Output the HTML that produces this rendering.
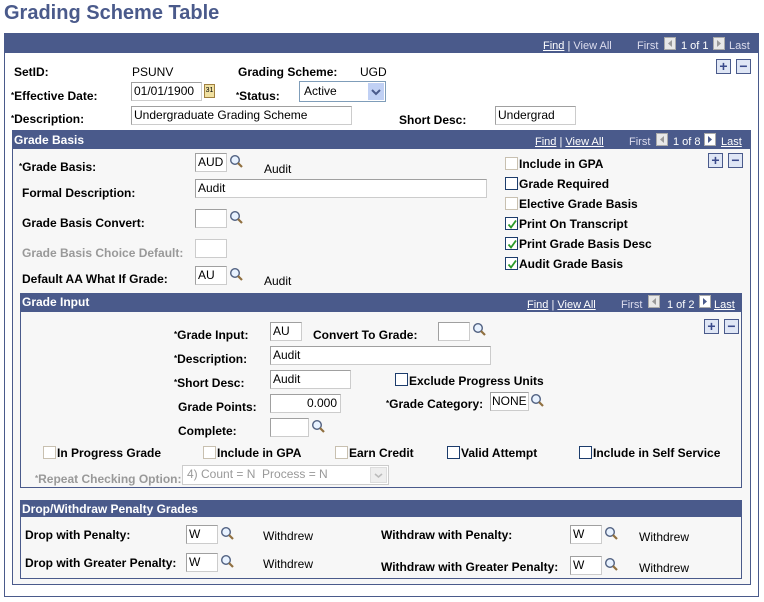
<!DOCTYPE html>
<html><head><style>
*{margin:0;padding:0;box-sizing:border-box}
body{width:764px;height:602px;background:#fff;position:relative;font-family:"Liberation Sans",Arial,sans-serif;font-size:12px;color:#000;overflow:hidden}
div,span{position:absolute}
.t{line-height:14px;white-space:nowrap}
.t span,.nav span{position:static}
.s{font-size:8px;vertical-align:2px}
.b{font-weight:bold}
.g{color:#999}
.box{border:1px solid #4a5a8b;background:#f7f7f7}
.hdr{background:#4a5a8b;color:#fff;font-weight:bold;line-height:18px}
.in{background:#fff;border:1px solid #a0a0a0;border-right-color:#ccc;border-bottom-color:#ccc;height:19px;line-height:16px;padding-left:2px;font-size:12px;white-space:nowrap}
.cb{width:13px;height:13px;background:#fff;border:1px solid #c8c0b0}
.cb.d{border-color:#1c3c6c}
.pm{width:15px;height:15px;border:1px solid #4a5a8b;background:#dfe6f5;color:#3a4a8b;font-weight:bold;font-size:14px;line-height:12px;text-align:center}
.nav{color:#fff;font-size:11px;line-height:14px;white-space:nowrap}
.nav u{color:#fff}
.arr{width:12px;height:13px;background:#e8e8e8;border:1px solid #aaa}
.arr.w{background:#fff}
</style></head><body>
<svg width="0" height="0" style="position:absolute"><defs>
<g id="mg"><circle cx="6" cy="6" r="4.3" fill="#e8f2ff" stroke="#506080" stroke-width="1.4"/><path d="M9 9l4 4" stroke="#907040" stroke-width="2.2"/></g>
<g id="ck"><path d="M2.5 6.5l2.5 3 5-7" stroke="#2a9a2a" stroke-width="1.8" fill="none"/></g>
<path id="la" d="M7 2v7l-4-3.5z"/>
<path id="ra" d="M3 2v7l4-3.5z"/>
</defs></svg>

<div class="t b" style="left:4px;top:2px;font-size:20px;line-height:22px;color:#4a5a8b">Grading Scheme Table</div>

<div class="box" style="left:4px;top:33px;width:755px;height:564px;background:#fff"></div>
<div class="hdr" style="left:5px;top:34px;width:753px;height:19px"></div>
<div class="nav" style="left:543px;top:39px"><u>Find</u> | <span style="color:#dde">View All</span></div>
<div class="nav" style="left:637px;top:39px;color:#dde">First</div>
<div class="arr" style="left:664px;top:37px"><svg width="10" height="11"><use href="#la" fill="#999"/></svg></div>
<div class="nav" style="left:681px;top:39px">1 of 1</div>
<div class="arr" style="left:713px;top:37px"><svg width="10" height="11"><use href="#ra" fill="#999"/></svg></div>
<div class="nav" style="left:729px;top:39px;color:#dde">Last</div>
<div class="pm" style="left:716px;top:59px">+</div><div class="pm" style="left:736px;top:59px">−</div>

<div class="t b" style="left:14px;top:65px">SetID:</div>
<div class="t" style="left:132px;top:65px">PSUNV</div>
<div class="t b" style="left:238px;top:65px">Grading Scheme:</div>
<div class="t" style="left:360px;top:65px">UGD</div>

<div class="t b" style="left:11px;top:89px"><span class="s">*</span>Effective Date:</div>
<div class="in" style="left:131px;top:82px;width:71px">01/01/1900</div>
<div style="left:204px;top:84px;width:11px;height:14px;background:#f0e0a0;border:1px solid #a08040;font-size:7px;line-height:12px;text-align:center">31</div>
<div class="t b" style="left:236px;top:89px"><span class="s">*</span>Status:</div>
<div class="in" style="left:299px;top:81px;width:87px;height:21px;border:1px solid #7f9db9;padding-left:4px;line-height:18px">Active</div>
<div style="left:368px;top:83px;width:16px;height:17px;background:#c0d0f4"><svg width="16" height="17"><path d="M4 7l4 4 4-4" stroke="#4a5a8b" stroke-width="2" fill="none"/></svg></div>

<div class="t b" style="left:11px;top:112px"><span class="s">*</span>Description:</div>
<div class="in" style="left:131px;top:106px;width:221px">Undergraduate Grading Scheme</div>
<div class="t b" style="left:399px;top:113px">Short Desc:</div>
<div class="in" style="left:495px;top:106px;width:81px">Undergrad</div>

<!-- Grade Basis -->
<div class="box" style="left:12px;top:130px;width:739px;height:455px"></div>
<div class="hdr" style="left:13px;top:131px;width:737px;height:18px;padding-left:1px">Grade Basis</div>
<div class="nav" style="left:535px;top:135px"><u>Find</u> | <u>View All</u></div>
<div class="nav" style="left:629px;top:135px;color:#dde">First</div>
<div class="arr" style="left:656px;top:133px"><svg width="10" height="11"><use href="#la" fill="#999"/></svg></div>
<div class="nav" style="left:673px;top:135px">1 of 8</div>
<div class="arr w" style="left:704px;top:133px"><svg width="10" height="11"><use href="#ra" fill="#4a5a8b"/></svg></div>
<div class="nav" style="left:721px;top:135px"><u>Last</u></div>
<div class="pm" style="left:708px;top:153px">+</div><div class="pm" style="left:728px;top:153px">−</div>

<div class="t b" style="left:19px;top:160px"><span class="s">*</span>Grade Basis:</div>
<div class="in" style="left:195px;top:153px;width:32px">AUD</div>
<svg style="position:absolute;left:229px;top:154px" width="15" height="15"><use href="#mg"/></svg>
<div class="t" style="left:264px;top:162px">Audit</div>
<div class="t b" style="left:22px;top:186px">Formal Description:</div>
<div class="in" style="left:195px;top:179px;width:292px">Audit</div>
<div class="t b" style="left:22px;top:216px">Grade Basis Convert:</div>
<div class="in" style="left:195px;top:209px;width:32px"></div>
<svg style="position:absolute;left:229px;top:210px" width="15" height="15"><use href="#mg"/></svg>
<div class="t b g" style="left:22px;top:246px">Grade Basis Choice Default:</div>
<div class="in" style="left:195px;top:239px;width:32px;border-color:#ccc"></div>
<div class="t b" style="left:22px;top:272px">Default AA What If Grade:</div>
<div class="in" style="left:195px;top:266px;width:32px">AU</div>
<svg style="position:absolute;left:229px;top:267px" width="15" height="15"><use href="#mg"/></svg>
<div class="t" style="left:264px;top:274px">Audit</div>

<div class="cb" style="left:505px;top:157px"></div><div class="t b" style="left:519px;top:157px">Include in GPA</div>
<div class="cb d" style="left:505px;top:177px"></div><div class="t b" style="left:519px;top:177px">Grade Required</div>
<div class="cb" style="left:505px;top:197px"></div><div class="t b" style="left:519px;top:197px">Elective Grade Basis</div>
<div class="cb d" style="left:505px;top:217px"><svg width="12" height="12"><use href="#ck"/></svg></div><div class="t b" style="left:519px;top:217px">Print On Transcript</div>
<div class="cb d" style="left:505px;top:237px"><svg width="12" height="12"><use href="#ck"/></svg></div><div class="t b" style="left:519px;top:237px">Print Grade Basis Desc</div>
<div class="cb d" style="left:505px;top:257px"><svg width="12" height="12"><use href="#ck"/></svg></div><div class="t b" style="left:519px;top:257px">Audit Grade Basis</div>

<!-- Grade Input -->
<div class="box" style="left:20px;top:293px;width:722px;height:195px"></div>
<div class="hdr" style="left:21px;top:294px;width:720px;height:18px;padding-left:1px;line-height:17px">Grade Input</div>
<div class="nav" style="left:527px;top:298px"><u>Find</u> | <u>View All</u></div>
<div class="nav" style="left:621px;top:298px;color:#dde">First</div>
<div class="arr" style="left:648px;top:295px"><svg width="10" height="11"><use href="#la" fill="#999"/></svg></div>
<div class="nav" style="left:667px;top:298px">1 of 2</div>
<div class="arr w" style="left:699px;top:295px"><svg width="10" height="11"><use href="#ra" fill="#4a5a8b"/></svg></div>
<div class="nav" style="left:714px;top:298px"><u>Last</u></div>
<div class="pm" style="left:704px;top:319px">+</div><div class="pm" style="left:724px;top:319px">−</div>

<div class="t b" style="left:174px;top:328px"><span class="s">*</span>Grade Input:</div>
<div class="in" style="left:270px;top:322px;width:32px">AU</div>
<div class="t b" style="left:313px;top:328px">Convert To Grade:</div>
<div class="in" style="left:438px;top:322px;width:32px"></div>
<svg style="position:absolute;left:472px;top:322px" width="15" height="15"><use href="#mg"/></svg>
<div class="t b" style="left:174px;top:352px"><span class="s">*</span>Description:</div>
<div class="in" style="left:270px;top:346px;width:221px">Audit</div>
<div class="t b" style="left:174px;top:376px"><span class="s">*</span>Short Desc:</div>
<div class="in" style="left:270px;top:370px;width:81px">Audit</div>
<div class="cb d" style="left:395px;top:373px"></div><div class="t b" style="left:409px;top:374px">Exclude Progress Units</div>
<div class="t b" style="left:178px;top:400px">Grade Points:</div>
<div class="in" style="left:270px;top:394px;width:71px;text-align:right;padding-right:3px">0.000</div>
<div class="t b" style="left:386px;top:397px"><span class="s">*</span>Grade Category:</div>
<div class="in" style="left:490px;top:392px;width:39px;padding-left:1px">NONE</div>
<svg style="position:absolute;left:530px;top:393px" width="15" height="15"><use href="#mg"/></svg>
<div class="t b" style="left:178px;top:424px">Complete:</div>
<div class="in" style="left:270px;top:418px;width:39px"></div>
<svg style="position:absolute;left:311px;top:419px" width="15" height="15"><use href="#mg"/></svg>

<div class="cb" style="left:43px;top:446px"></div><div class="t b" style="left:57px;top:446px">In Progress Grade</div>
<div class="cb" style="left:203px;top:446px"></div><div class="t b" style="left:217px;top:446px">Include in GPA</div>
<div class="cb" style="left:335px;top:446px"></div><div class="t b" style="left:349px;top:446px">Earn Credit</div>
<div class="cb d" style="left:447px;top:446px"></div><div class="t b" style="left:461px;top:446px">Valid Attempt</div>
<div class="cb d" style="left:579px;top:446px"></div><div class="t b" style="left:593px;top:446px">Include in Self Service</div>

<div class="t b g" style="left:35px;top:472px"><span class="s">*</span>Repeat Checking Option:</div>
<div class="in" style="left:182px;top:465px;width:207px;height:20px;border-color:#ccc;color:#999;padding-left:4px">4) Count = N&nbsp; Process = N</div>
<div style="left:370px;top:467px;width:17px;height:16px;background:#eee;border:1px solid #ddd"><svg width="15" height="14"><path d="M4 6l3.5 3 3.5-3" stroke="#bbb" stroke-width="1.6" fill="none"/></svg></div>

<!-- Drop/Withdraw -->
<div class="box" style="left:20px;top:500px;width:722px;height:79px"></div>
<div class="hdr" style="left:21px;top:501px;width:720px;height:16px;line-height:16px;padding-left:1px">Drop/Withdraw Penalty Grades</div>
<div class="t b" style="left:25px;top:528px">Drop with Penalty:</div>
<div class="in" style="left:186px;top:525px;width:32px">W</div>
<svg style="position:absolute;left:220px;top:526px" width="15" height="15"><use href="#mg"/></svg>
<div class="t" style="left:263px;top:529px">Withdrew</div>
<div class="t b" style="left:381px;top:528px">Withdraw with Penalty:</div>
<div class="in" style="left:570px;top:525px;width:32px">W</div>
<svg style="position:absolute;left:604px;top:526px" width="15" height="15"><use href="#mg"/></svg>
<div class="t" style="left:639px;top:530px">Withdrew</div>
<div class="t b" style="left:25px;top:556px">Drop with Greater Penalty:</div>
<div class="in" style="left:186px;top:553px;width:32px">W</div>
<svg style="position:absolute;left:220px;top:554px" width="15" height="15"><use href="#mg"/></svg>
<div class="t" style="left:263px;top:557px">Withdrew</div>
<div class="t b" style="left:381px;top:560px">Withdraw with Greater Penalty:</div>
<div class="in" style="left:570px;top:556px;width:32px">W</div>
<svg style="position:absolute;left:604px;top:557px" width="15" height="15"><use href="#mg"/></svg>
<div class="t" style="left:639px;top:561px">Withdrew</div>
</body></html>
